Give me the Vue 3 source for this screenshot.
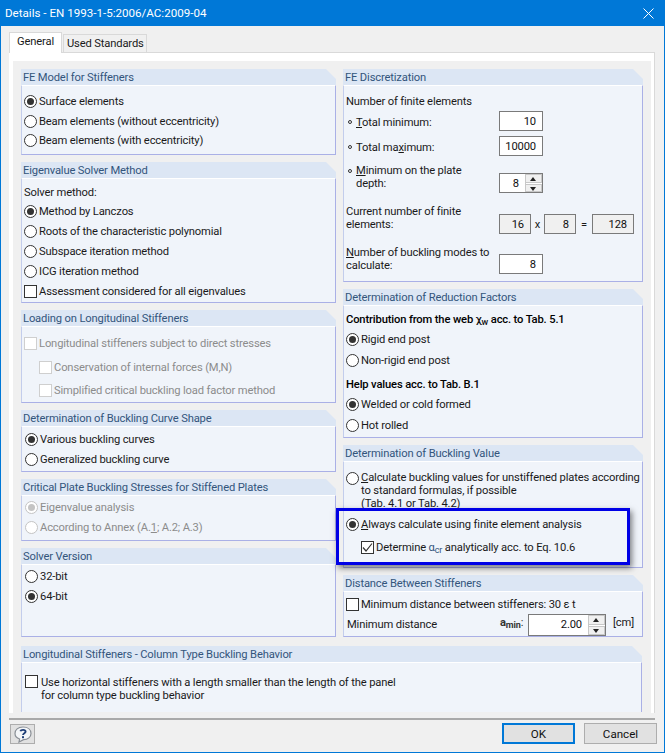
<script setup>
const feModel = [
  { text: 'Surface elements', on: true },
  { text: 'Beam elements (without eccentricity)' },
  { text: 'Beam elements (with eccentricity)' }
]
const solvers = [
  { text: 'Method by Lanczos', on: true },
  { text: 'Roots of the characteristic polynomial' },
  { text: 'Subspace iteration method' },
  { text: 'ICG iteration method' }
]
</script>

<template>
  <div class="window">
    <div class="titlebar">
      <span class="title">Details - EN 1993-1-5:2006/AC:2009-04</span>
      <svg class="close" width="11" height="11" viewBox="0 0 11 11">
        <path d="M0.5 0.5 L10.5 10.5 M10.5 0.5 L0.5 10.5" stroke="#fff" stroke-width="1" fill="none" />
      </svg>
    </div>

    <div class="tabs">
      <div class="tab active">General</div>
      <div class="tab">Used Standards</div>
    </div>

    <div class="tab-page">
      <div class="panel">
        <div class="columns">
          <div class="col">
            <section class="group h-fe">
              <div class="group-head">FE Model for Stiffeners</div>
              <div class="group-body pt6">
                <div class="row r195" v-for="r in feModel" :key="r.text">
                  <span class="radio" :class="{ on: r.on }"></span>{{ r.text }}
                </div>
              </div>
            </section>

            <section class="group h-eigen">
              <div class="group-head">Eigenvalue Solver Method</div>
              <div class="group-body pt5">
                <div class="plain r17">Solver method:</div>
                <div class="row" v-for="r in solvers" :key="r.text">
                  <span class="radio" :class="{ on: r.on }"></span>{{ r.text }}
                </div>
                <div class="row"><span class="check"></span>Assessment considered for all eigenvalues</div>
              </div>
            </section>

            <section class="group h-load">
              <div class="group-head">Loading on Longitudinal Stiffeners</div>
              <div class="group-body pt5 off">
                <div class="row r235"><span class="check"></span>Longitudinal stiffeners subject to direct stresses</div>
                <div class="row r235 sub"><span class="check"></span>Conservation of internal forces (M,N)</div>
                <div class="row r235 sub"><span class="check"></span>Simplified critical buckling load factor method</div>
              </div>
            </section>

            <section class="group h-curve">
              <div class="group-head">Determination of Buckling Curve Shape</div>
              <div class="group-body pt3 in3">
                <div class="row r195"><span class="radio on"></span>Various buckling curves</div>
                <div class="row r195"><span class="radio"></span>Generalized buckling curve</div>
              </div>
            </section>

            <section class="group h-crit">
              <div class="group-head">Critical Plate Buckling Stresses for Stiffened Plates</div>
              <div class="group-body pt2 in3 off">
                <div class="row r195"><span class="radio on"></span>Eigenvalue analysis</div>
                <div class="row r195"><span class="radio"></span><span>According to Annex (A.<u>1</u>; A.2; A.3)</span></div>
              </div>
            </section>

            <section class="group h-ver">
              <div class="group-head">Solver Version</div>
              <div class="group-body pt1 in3">
                <div class="row"><span class="radio"></span>32-bit</div>
                <div class="row"><span class="radio on"></span>64-bit</div>
              </div>
            </section>
          </div>

          <div class="col">
            <section class="group h-disc">
              <div class="group-head">FE Discretization</div>
              <div class="group-body pt5 disc">
                <div class="plain r20">Number of finite elements</div>
                <div class="field-row">
                  <span class="bullet-label"><u>T</u>otal minimum:</span>
                  <div class="field w44">10</div>
                </div>
                <div class="field-row mt5">
                  <span class="bullet-label">Total ma<u>x</u>imum:</span>
                  <div class="field w44">10000</div>
                </div>
                <div class="field-row tall mt7">
                  <span class="bullet-label top"><u>M</u>inimum on the plate<br>depth:</span>
                  <div class="field w44 spin">
                    <span class="spin-val">8</span>
                    <span class="spinner"><i class="up"></i><i class="down"></i></span>
                  </div>
                </div>
                <div class="field-row tall mt11">
                  <span class="multi">Current number of finite<br>elements:</span>
                  <div class="calc">
                    <div class="field ro w32">16</div>
                    <span class="op-x">x</span>
                    <div class="field ro w32">8</div>
                    <span class="op-eq">=</span>
                    <div class="field ro w42">128</div>
                  </div>
                </div>
                <div class="field-row tall mt10">
                  <span class="multi low"><u>N</u>umber of buckling modes to<br>calculate:</span>
                  <div class="field w44">8</div>
                </div>
              </div>
            </section>

            <section class="group h-red">
              <div class="group-head">Determination of Reduction Factors</div>
              <div class="group-body pt4 in2">
                <div class="plain strong r19">Contribution from the web <span class="greek">χ<sub>w</sub></span> acc. to Tab. 5.1</div>
                <div class="row"><span class="radio on"></span>Rigid end post</div>
                <div class="row mt1"><span class="radio"></span>Non-rigid end post</div>
                <div class="plain strong r19 mt5">Help values acc. to Tab. B.1</div>
                <div class="row"><span class="radio on"></span>Welded or cold formed</div>
                <div class="row mt1"><span class="radio"></span>Hot rolled</div>
              </div>
            </section>

            <section class="group h-val">
              <div class="group-head">Determination of Buckling Value</div>
              <div class="group-body pt10 in2">
                <div class="row-top">
                  <span class="radio"></span>
                  <span class="multi"><u>C</u>alculate buckling values for unstiffened plates according<br>to standard formulas, if possible<br>(Tab. 4.1 or Tab. 4.2)</span>
                </div>
                <div class="row mt4"><span class="radio on"></span><span><u>A</u>lways calculate using finite element analysis</span></div>
                <div class="row mt3 sub-r"><span class="check on"><svg width="11" height="11" viewBox="0 0 11 11"><path d="M1 5.5 L4 9 L10 1.5" fill="none" stroke="#333" stroke-width="1.2" /></svg></span><span>Determine <span class="greek">α<sub>cr</sub></span> analytically acc. to Eq. 10.6</span></div>
              </div>
              <div class="highlight"></div>
            </section>

            <section class="group h-dist">
              <div class="group-head">Distance Between Stiffeners</div>
              <div class="group-body pt2 in2">
                <div class="row"><span class="check"></span>Minimum distance between stiffeners: 30 ε t</div>
                <div class="min-row">
                  <span class="min-label">Minimum distance</span>
                  <span class="amin">a<sub>min</sub><em>:</em></span>
                  <div class="field w78 spin">
                    <span class="spin-val">2.00</span>
                    <span class="spinner"><i class="up"></i><i class="down"></i></span>
                  </div>
                  <span class="unit">[cm]</span>
                </div>
              </div>
            </section>
          </div>
        </div>

        <section class="group h-long">
          <div class="group-head">Longitudinal Stiffeners - Column Type Buckling Behavior</div>
          <div class="group-body long-body">
            <span class="check"></span>
            <span class="multi">Use horizontal stiffeners with a length smaller than the length of the panel<br>for column type buckling behavior</span>
          </div>
        </section>
      </div>
    </div>

    <div class="footer">
      <button class="help" type="button" aria-label="Help">
        <svg width="20" height="17" viewBox="0 0 20 17">
          <path d="M10 1 C15 1 18 3.8 18 7.5 C18 11 15 13.6 10.5 13.6 L6 16 L6.6 13 C3.6 12 2 10 2 7.5 C2 3.8 5 1 10 1 Z" fill="#f4f6f8" stroke="#8a8f96" stroke-width="1.2" />
          <path d="M7.4 5.2 C7.8 3.6 12.4 3.2 12.6 5.6 C12.7 7.2 10.2 7.4 10 9" fill="none" stroke="#1f3f78" stroke-width="1.9" />
          <rect x="9" y="10.2" width="2" height="2" fill="#1f3f78" />
        </svg>
      </button>
      <div class="actions">
        <button class="btn default" type="button">OK</button>
        <button class="btn" type="button">Cancel</button>
      </div>
    </div>
  </div>
</template>

<style>
html, body { margin: 0; padding: 0; background: #f0f0f0; }
</style>

<style scoped>
.window {
  position: relative;
  width: 665px;
  height: 753px;
  box-sizing: border-box;
  border: 1px solid #0078d7;
  border-top: 0;
  background: #f0f0f0;
  font-family: Roboto, "Liberation Sans", sans-serif;
  font-size: 11.2px;
  letter-spacing: -0.15px;
  color: #1a1a1a;
  overflow: hidden;
}

.titlebar {
  height: 26px;
  margin: 0 -1px;
  padding: 0 11px 0 5px;
  background: #0078d7;
  color: #fff;
  display: flex;
  align-items: center;
  justify-content: space-between;
  font-size: 11.6px;
  letter-spacing: 0;
}
.close { display: block; }

.tabs {
  display: flex;
  align-items: flex-end;
  height: 21px;
  margin: 5px 0 0 8px;
}
.tab {
  width: 84px;
  height: 18px;
  padding: 0 3px;
  line-height: 18px;
  border: 1px solid #d9d9d9;
  border-bottom: 0;
  box-sizing: border-box;
  margin-left: 1px;
  white-space: nowrap;
}
.tab.active {
  height: 21px;
  line-height: 17px;
  margin-left: 0;
  padding: 0 7px;
  background: #fff;
  position: relative;
  top: 1px;
  width: 53px;
}

.tab-page {
  margin: 0 9px 0 8px;
  height: 661px;
  box-sizing: border-box;
  background: #fff;
  border-top: 1px solid #d9d9d9;
  border-right: 1px solid #d9d9d9;
  padding: 8px 3px 0 4px;
}
.panel {
  height: 652px;
  background: #f0f0f0;
  padding: 8px 8px 0 8px;
  box-sizing: border-box;
}
.columns {
  display: flex;
  gap: 7px;
}
.col {
  display: flex;
  flex-direction: column;
  gap: 7px;
}
.col:first-child { width: 315px; }
.col:last-child { width: 300px; }

.group {
  position: relative;
  display: flex;
  flex-direction: column;
}
.group-head {
  flex: none;
  height: 16px;
  line-height: 17px;
  padding-left: 2px;
  background: #dce6f4;
  color: #33557c;
  clip-path: polygon(0 0, calc(100% - 10px) 0, 100% 10px, 100% 100%, 0 100%);
  white-space: nowrap;
}
.group-body {
  flex: 1;
  min-height: 0;
  background: #f0f4fa;
  border-top: 1px solid #fff;
  border-left: 1px solid #c3cdec;
  border-right: 1px solid #aab0e6;
  border-bottom: 1px solid #aab0e6;
  padding-left: 2px;
  box-sizing: border-box;
}

.h-fe { height: 86px; }
.h-eigen { height: 141px; }
.h-load { height: 93px; }
.h-curve { height: 62px; }
.h-crit { height: 62px; }
.h-ver { height: 89px; }
.h-disc { height: 213px; }
.h-red { height: 149px; }
.h-val { height: 123px; }
.h-dist { height: 62px; }
.h-long {
  height: 66px;
  margin-top: 9px;
  width: 621px;
}

.pt1 { padding-top: 1px; }
.pt2 { padding-top: 2px; }
.pt3 { padding-top: 3px; }
.pt4 { padding-top: 4px; }
.pt5 { padding-top: 5px; }
.pt6 { padding-top: 6px; }
.pt10 { padding-top: 9px; }
.in3 { padding-left: 3px; }
.in2 { padding-left: 2px; }
.mt1 { margin-top: 1px; }
.mt3 { margin-top: 3px; }
.mt4 { margin-top: 4px; }
.mt5 { margin-top: 5px; }
.mt7 { margin-top: 7px; }
.mt10 { margin-top: 10px; }
.mt11 { margin-top: 11px; }

.row {
  display: flex;
  align-items: center;
  height: 20px;
  white-space: nowrap;
}
.r195 { height: 19.5px; }
.r235 { height: 23.5px; }
.sub { padding-left: 15px; }
.sub-r { padding-left: 15px; }
.row-top {
  display: flex;
  align-items: flex-start;
  white-space: nowrap;
}
.plain {
  display: flex;
  align-items: center;
  white-space: pre;
}
.r17 { height: 17px; }
.r19 { height: 19px; }
.r20 { height: 20px; }
.strong { font-weight: 500; color: #000; }
.multi { line-height: 13px; white-space: nowrap; }
.off { color: #8c8c8c; }

.radio {
  flex: none;
  width: 13px;
  height: 13px;
  margin-right: 2px;
  box-sizing: border-box;
  border: 1px solid #333;
  border-radius: 50%;
  background: #fff;
  display: flex;
  align-items: center;
  justify-content: center;
}
.radio.on::after {
  content: "";
  width: 7px;
  height: 7px;
  border-radius: 50%;
  background: #333;
}
.off .radio { border-color: #c4c4c4; }
.off .radio.on::after { background: #c4c4c4; }
.row-top .radio { margin-top: 1px; }

.check {
  flex: none;
  width: 13px;
  height: 13px;
  margin-right: 2px;
  box-sizing: border-box;
  border: 1px solid #333;
  background: #fff;
  display: flex;
  align-items: center;
  justify-content: center;
}
.off .check { border-color: #cfcfcf; }

.greek { color: #33557c; }
.strong .greek { color: #111; }
sub {
  font-size: 9px;
  line-height: 0;
  vertical-align: -2px;
}

.field-row {
  display: flex;
  align-items: center;
  height: 20px;
}
.field-row > span {
  flex: none;
  width: 153px;
  padding-top: 2px;
}
.field-row.tall {
  align-items: flex-end;
  height: 30px;
}
.field-row.tall > span {
  align-self: flex-start;
  padding-top: 1px;
}
.field-row.tall > span.low { padding-top: 2px; }
.bullet-label {
  position: relative;
  box-sizing: border-box;
  padding-left: 10px;
  line-height: 13px;
  white-space: nowrap;
}
.bullet-label::before {
  content: "";
  position: absolute;
  left: 2px;
  top: 6px;
  width: 4px;
  height: 4px;
  box-sizing: border-box;
  border: 1px solid #333;
  border-radius: 50%;
}
.field {
  height: 20px;
  box-sizing: border-box;
  border: 1px solid #7a7a7a;
  background: #fff;
  text-align: right;
  padding-right: 6px;
  line-height: 19px;
  color: #111;
}
.w44 { width: 44px; }
.w32 { width: 32px; }
.w42 { width: 42px; }
.w78 { width: 78px; }
.field.ro { background: #f0f0f0; }
.calc {
  display: flex;
  align-items: center;
}
.op-x { width: 13px; text-align: center; }
.op-eq { width: 16px; text-align: center; }

.spin {
  display: flex;
  padding-right: 0;
  align-items: stretch;
}
.spin-val {
  flex: 1;
  padding-right: 6px;
}
.spinner {
  flex: none;
  width: 16px;
  display: flex;
  flex-direction: column;
  gap: 1px;
  background: #fff;
  border-left: 1px solid #c8c8c8;
}
.spinner i {
  flex: 1;
  position: relative;
  background: #f0f0f0;
  border: 1px solid #c8c8c8;
  border-left: 0;
}
.spinner i::after {
  content: "";
  position: absolute;
  left: 4px;
  top: 2px;
  border-left: 3.5px solid transparent;
  border-right: 3.5px solid transparent;
}
.spinner .up::after { border-bottom: 4px solid #222; }
.spinner .down::after { border-top: 4px solid #222; }

.highlight {
  position: absolute;
  left: -7px;
  top: 63px;
  width: 294px;
  height: 57px;
  box-sizing: border-box;
  border: 3px solid #0000e6;
  box-shadow: 2px 3px 6px rgba(0, 0, 0, 0.5);
  z-index: 2;
}

.min-row {
  display: flex;
  align-items: flex-start;
  height: 22px;
}
.min-label {
  width: 135px;
  padding-left: 1px;
  margin-right: 18px;
  line-height: 22px;
}
.amin {
  width: 28px;
  font-weight: 700;
  color: #333;
  white-space: nowrap;
  line-height: 18px;
}
.amin em { font-style: normal; font-weight: 400; }
.w78.spin { height: 22px; line-height: 20px; flex: none; }
.unit { margin-left: 7px; line-height: 18px; }

.long-body {
  display: flex;
  align-items: flex-start;
  gap: 1px;
  padding: 12px 0 0 3px;
  border-bottom: 0;
}
.long-body .multi { margin-top: 1px; }

.footer {
  height: 34px;
  margin: 5px 9px 0 8px;
  border-top: 2px solid #a9a9a9;
  display: flex;
  justify-content: space-between;
  align-items: flex-start;
  padding-top: 3px;
  box-sizing: border-box;
}
.help {
  width: 25px;
  height: 20px;
  margin: 1px 0 0 1px;
  padding: 0;
  background: #e1e1e1;
  border: 1px solid #adadad;
  display: flex;
  align-items: center;
  justify-content: center;
}
.actions {
  display: flex;
  gap: 9px;
  margin-right: -2px;
}
.btn {
  width: 73px;
  height: 21px;
  padding: 0;
  background: #e1e1e1;
  border: 1px solid #adadad;
  font-family: inherit;
  font-size: 11.6px;
  color: #111;
}
.btn.default { border: 2px solid #0078d7; }
</style>
